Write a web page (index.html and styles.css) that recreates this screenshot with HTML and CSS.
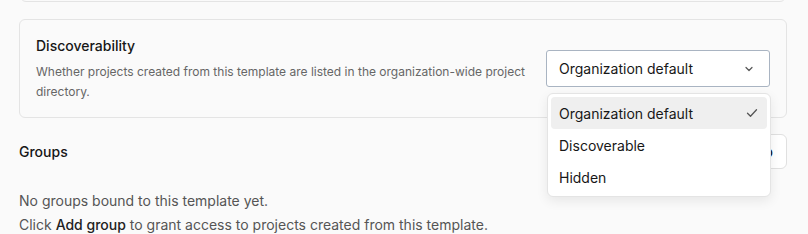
FILE: index.html
```html
<!DOCTYPE html>
<html>
<head>
    <title>Template settings</title>
    <link rel="stylesheet" href="styles.css">
</head>
<body>

<div class="card card-prev"></div>

<div class="card setting">
    <div class="setting-text">
        <div class="setting-title">Discoverability</div>
        <div class="setting-desc">Whether projects created from this template are listed in the organization-wide project directory.</div>
    </div>
    <div class="select-wrap">
        <button class="select">
            <span>Organization default</span>
            <svg width="12" height="12" viewBox="0 0 12 12"><path d="M3 4.5 6 7.5 9 4.5" fill="none" stroke="#555" stroke-width="1.2" stroke-linecap="round" stroke-linejoin="round"/></svg>
        </button>
        <div class="menu">
            <div class="option active">
                <span>Organization default</span>
                <svg width="14" height="14" viewBox="0 0 14 14"><path d="M2.5 7.3 5.5 10.2 11.5 3.8" fill="none" stroke="#555" stroke-width="1.3" stroke-linecap="round" stroke-linejoin="round"/></svg>
            </div>
            <div class="option">Discoverable</div>
            <div class="option">Hidden</div>
        </div>
    </div>
</div>

<div class="section-head">
    <h2>Groups</h2>
    <button class="btn">Add group</button>
</div>

<p class="empty">No groups bound to this template yet.<br>Click <b>Add group</b> to grant access to projects created from this template.</p>

</body>
</html>
```

FILE: styles.css
```css
body {
    margin: 0;
    padding: 0 21px 0 19px;
    background: #fafafa;
    font-family: Inter, "Noto Sans", sans-serif;
    color: #171717;
    overflow: hidden;
}

.card {
    border: 1px solid #e4e4e4;
    border-radius: 6px;
    background: #fafafa;
}

.card-prev {
    height: 20px;
    margin: -20px 1px 0 1px;
}

.setting {
    margin-top: 17px;
    padding: 16px;
    display: flex;
    align-items: center;
    justify-content: space-between;
}

.setting-text {
    width: 490px;
}

.setting-title {
    font-size: 14px;
    font-weight: 500;
    line-height: 20px;
}

.setting-desc {
    margin-top: 6px;
    font-size: 12px;
    line-height: 19.5px;
    color: #666;
}

.select-wrap {
    position: relative;
}

.select {
    width: 224px;
    height: 37px;
    padding: 0 14px 0 12px;
    display: flex;
    align-items: center;
    justify-content: space-between;
    background: #fff;
    border: 1px solid #a9b4c2;
    border-radius: 3px;
    font-family: inherit;
    font-size: 14px;
    color: #171717;
}

.menu {
    position: absolute;
    top: 43px;
    left: 1px;
    width: 224px;
    box-sizing: border-box;
    padding: 3px;
    background: #fff;
    border: 1px solid #e4e4e4;
    border-radius: 6px;
    box-shadow: 0 4px 12px rgba(0, 0, 0, 0.08);
    z-index: 2;
}

.option {
    height: 32px;
    padding: 0 8px;
    display: flex;
    align-items: center;
    justify-content: space-between;
    font-size: 14px;
    border-radius: 4px;
}

.option.active {
    background: #efefef;
}

.section-head {
    margin-top: 16px;
    display: flex;
    align-items: center;
    justify-content: space-between;
}

.section-head h2 {
    margin: 0;
    font-size: 14px;
    font-weight: 500;
}

.btn {
    height: 35px;
    padding: 0 13px;
    background: #fff;
    border: 1px solid #e0e0e0;
    border-radius: 6px;
    font-family: inherit;
    font-size: 14px;
    font-weight: 500;
    color: #171717;
}

.empty {
    margin: 20px 0 0;
    font-size: 14px;
    line-height: 24px;
    color: #555;
}

.empty b {
    font-weight: 500;
    color: #222;
}
```
